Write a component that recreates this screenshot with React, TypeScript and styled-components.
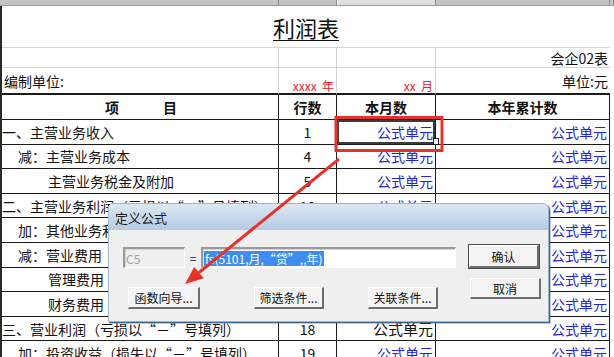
import React from "react";
import styled, { createGlobalStyle } from "styled-components";

const GlobalStyle = createGlobalStyle`
  html, body { margin: 0; padding: 0; background: #fff; }
  body { font-family: "Noto Sans CJK SC", "Noto Sans", sans-serif; overflow: hidden; }
`;

const COLS = "277px 58px 99px 174px";
const FONT = `"Noto Sans CJK SC", "Noto Sans", sans-serif`;

const Page = styled.div`
  position: relative;
  width: 614px;
  height: 357px;
  overflow: hidden;
  background: #fff;
  font-family: ${FONT};
  color: #111;
`;

const Strip = styled.div`
  display: grid;
  grid-template-columns: 279px 58px 99px 174px 4px;
  height: 6px;
  background: #c4c4c4;
  border-bottom: 1px solid #9a9a9a;
  box-sizing: border-box;
`;

const StripCell = styled.div<{ $active?: boolean }>`
  box-sizing: border-box;
  border-right: 1px solid #8a8a8a;
  background: ${(p) => (p.$active ? "#dedede" : "#c4c4c4")};
  ${(p) => (p.$active ? "border-left: 1px solid #f4f4f4;" : "")}
`;

const Sheet = styled.div`
  display: grid;
  grid-template-columns: ${COLS};
  grid-template-rows: 42px 20px 27px 25px repeat(10, 24.6px);
  width: 608px;
  border-left: 2px solid #2a2a2a;
`;

const TitleCell = styled.div`
  grid-column: 1 / span 4;
  display: flex;
  align-items: center;
  justify-content: center;
  border-bottom: 1px solid #d4d4d4;
  box-sizing: border-box;
`;

const Title = styled.span`
  font-size: 22px;
  text-decoration: underline;
  text-underline-offset: 3px;
  text-decoration-thickness: 1px;
`;

const InfoCell = styled.div<{ $align?: "left" | "right"; $last?: boolean; $thick?: boolean; $bottomText?: boolean }>`
  box-sizing: border-box;
  display: flex;
  align-items: ${(p) => (p.$bottomText ? "flex-end" : "center")};
  justify-content: ${(p) => (p.$align === "right" ? "flex-end" : "flex-start")};
  border-right: ${(p) => (p.$last ? "none" : "1px solid #d4d4d4")};
  border-bottom: ${(p) => (p.$thick ? "2px solid #1a1a1a" : "1px solid #d4d4d4")};
  font-size: 14px;
  padding: 0 2px 0 2px;
  white-space: pre;
`;

const RedMark = styled.span`
  color: #e8242a;
  font-size: 12px;
  line-height: 15px;
`;

const Cell = styled.div<{
  $align?: "left" | "center" | "right";
  $indent?: number;
  $bold?: boolean;
  $color?: string;
  $size?: number;
  $selected?: boolean;
}>`
  position: relative;
  box-sizing: border-box;
  display: flex;
  align-items: center;
  justify-content: ${(p) =>
    p.$align === "center" ? "center" : p.$align === "right" ? "flex-end" : "flex-start"};
  padding-left: ${(p) => p.$indent ?? 0}px;
  padding-right: ${(p) => (p.$align === "right" ? 2 : 0)}px;
  border-right: 1px solid #1a1a1a;
  border-bottom: 1px solid #1a1a1a;
  font-size: ${(p) => p.$size ?? 14}px;
  font-weight: ${(p) => (p.$bold ? 700 : 400)};
  color: ${(p) => p.$color ?? "#111"};
  white-space: nowrap;
  overflow: hidden;
  ${(p) =>
    p.$selected
      ? `box-shadow: inset 0 0 0 2px #3b3b3b; overflow: visible;
         &::after { content: ""; position: absolute; right: -4px; bottom: -1px; width: 4px; height: 5px; background: #fff; border: 1px solid #222; }`
      : ""}
`;

const HeadPair = styled.div`
  display: flex;
  gap: 44px;
  padding-left: 2px;
`;

/* Dialog */
const Dialog = styled.div`
  position: absolute;
  left: 108px;
  top: 203px;
  width: 441px;
  height: 119px;
  box-sizing: border-box;
  background: #efefef;
  border: 1px solid #9fb6cc;
  border-radius: 5px 6px 0 0;
  box-shadow: 1px 1px 0 #3c6688, 2px 2px 0 rgba(60, 102, 136, 0.35);
  display: flex;
  flex-direction: column;
  font-family: ${FONT};
  font-size: 12px;
  color: #111;
`;

const TitleBar = styled.div`
  height: 26px;
  background: linear-gradient(#dbe7f3, #b4cbe2);
  border-radius: 4px 5px 0 0;
  display: flex;
  align-items: center;
  padding-left: 6px;
  font-size: 13px;
  color: #1a1a1a;
`;

const Body = styled.div`
  display: flex;
  padding: 15px 0 0 14px;
`;

const LeftCol = styled.div`
  display: flex;
  flex-direction: column;
  width: 333px;
`;

const InputRow = styled.div`
  display: flex;
  align-items: center;
  margin-top: 2px;
  height: 21px;
`;

const Field = styled.div<{ $width: number; $disabled?: boolean }>`
  box-sizing: border-box;
  width: ${(p) => p.$width}px;
  height: 21px;
  background: ${(p) => (p.$disabled ? "#efefef" : "#fff")};
  border-style: solid;
  border-width: 2px 1px 1px 2px;
  border-color: #9a9a9a #ffffff #ffffff #9a9a9a;
  box-shadow: inset 1px 1px 0 #d6d6d6;
  color: ${(p) => (p.$disabled ? "#a2a2a2" : "#111")};
  display: flex;
  align-items: center;
  padding-left: 1px;
  font-size: 12px;
  white-space: nowrap;
  overflow: hidden;
`;

const Equals = styled.span`
  width: 16px;
  text-align: center;
  font-size: 12px;
`;

const Selected = styled.span`
  background: #3d8ef0;
  color: #fff;
  padding: 0 1px;
  line-height: 15px;
`;

const ButtonRow = styled.div`
  display: flex;
  margin-top: 19px;
  padding-left: 5px;
`;

const Btn = styled.div<{ $width: number; $ml?: number; $mt?: number; $default?: boolean; $h?: number }>`
  box-sizing: border-box;
  width: ${(p) => p.$width}px;
  height: ${(p) => p.$h ?? 22}px;
  margin-left: ${(p) => p.$ml ?? 0}px;
  margin-top: ${(p) => p.$mt ?? 0}px;
  background: #f3f3f3;
  border-style: solid;
  border-width: 1px 2px 2px 1px;
  border-color: #ffffff #6e6e6e #6e6e6e #ffffff;
  ${(p) => (p.$default ? "outline: 1px solid #4a4a4a; outline-offset: 0px;" : "")}
  display: flex;
  align-items: center;
  justify-content: center;
  font-size: 12px;
  color: #111;
  white-space: nowrap;
`;

const RightCol = styled.div`
  display: flex;
  flex-direction: column;
  margin-left: 13px;
`;

const Overlay = styled.svg`
  position: absolute;
  left: 0;
  top: 0;
  pointer-events: none;
`;

type Row = { label: string; indent: number; num: string; blackMonth?: boolean };

const rows: Row[] = [
  { label: "一、主营业务收入", indent: 0, num: "1" },
  { label: "减：主营业务成本", indent: 16, num: "4" },
  { label: "主营业务税金及附加", indent: 46, num: "5" },
  { label: "二、主营业务利润（亏损以“－”号填列）", indent: 0, num: "10" },
  { label: "加：其他业务利润", indent: 16, num: "11" },
  { label: "减：营业费用", indent: 16, num: "14" },
  { label: "管理费用", indent: 46, num: "15" },
  { label: "财务费用", indent: 46, num: "16" },
  { label: "三、营业利润（亏损以“－”号填列）", indent: 0, num: "18", blackMonth: true },
  { label: "加：投资收益（损失以“－”号填列）", indent: 16, num: "19" },
];

const BLUE = "#2424e0";

export default function App() {
  return (
    <Page>
      <GlobalStyle />
      <Strip>
        <StripCell />
        <StripCell />
        <StripCell $active />
        <StripCell />
        <StripCell />
      </Strip>
      <Sheet>
        <TitleCell>
          <Title>利润表</Title>
        </TitleCell>

        <InfoCell />
        <InfoCell />
        <InfoCell />
        <InfoCell $align="right" $last>会企02表</InfoCell>

        <InfoCell $thick>编制单位:</InfoCell>
        <InfoCell $thick $align="right" $bottomText>
          <RedMark>{"xxxx  年"}</RedMark>
        </InfoCell>
        <InfoCell $thick $align="right" $bottomText>
          <RedMark>{"xx  月"}</RedMark>
        </InfoCell>
        <InfoCell $thick $align="right" $last>单位:元</InfoCell>

        <Cell $align="center" $bold>
          <HeadPair>
            <span>项</span>
            <span>目</span>
          </HeadPair>
        </Cell>
        <Cell $align="center" $bold>行数</Cell>
        <Cell $align="center" $bold>本月数</Cell>
        <Cell $align="center" $bold>本年累计数</Cell>

        {rows.map((r, i) => (
          <React.Fragment key={i}>
            <Cell $indent={r.indent}>{r.label}</Cell>
            <Cell $align="center">{r.num}</Cell>
            <Cell
              $align="right"
              $color={r.blackMonth ? "#111" : BLUE}
              $size={r.blackMonth ? 15 : 14}
              $selected={i === 0}
            >
              公式单元
            </Cell>
            <Cell $align="right" $color={BLUE}>
              公式单元
            </Cell>
          </React.Fragment>
        ))}
      </Sheet>

      <Dialog>
        <TitleBar>定义公式</TitleBar>
        <Body>
          <LeftCol>
            <InputRow>
              <Field $width={62} $disabled>C5</Field>
              <Equals>=</Equals>
              <Field $width={255}>
                <Selected>fs(5101,月,“贷”,,年)</Selected>
              </Field>
            </InputRow>
            <ButtonRow>
              <Btn $width={72}>函数向导...</Btn>
              <Btn $width={70} $ml={54}>筛选条件...</Btn>
              <Btn $width={70} $ml={44}>关联条件...</Btn>
            </ButtonRow>
          </LeftCol>
          <RightCol>
            <Btn $width={70} $h={23} $default>确认</Btn>
            <Btn $width={71} $h={21} $ml={1} $mt={10}>取消</Btn>
          </RightCol>
        </Body>
      </Dialog>

      <Overlay width={614} height={357} viewBox="0 0 614 357">
        <rect x={336} y={117.5} width={106} height={33} fill="none" stroke="#e6322b" strokeWidth={3} />
        <line x1={339} y1={159} x2={199} y2={272.5} stroke="#e6322b" strokeWidth={3} />
        <polygon points="185,284 203.8,278.3 194.2,267" fill="#e6322b" />
      </Overlay>
    </Page>
  );
}
